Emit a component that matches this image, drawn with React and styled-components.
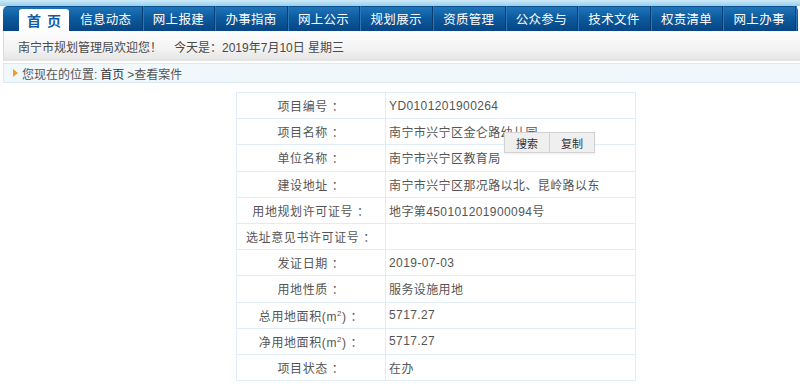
import React from "react";
import styled, { createGlobalStyle } from "styled-components";

const GlobalStyle = createGlobalStyle`
  html, body {
    margin: 0;
    padding: 0;
    background: #ffffff;
  }
  body {
    font-family: "Liberation Sans", Arial, "Noto Sans CJK SC", sans-serif;
  }
`;

const Page = styled.div`
  width: 800px;
  height: 384px;
  overflow: hidden;
  position: relative;
  background: #fff;
`;

const TopStrip = styled.div`
  height: 6px;
  background: linear-gradient(to bottom, #cdebf8, #98d0ec);
`;

const NavBar = styled.div`
  margin: 0 2px 0 3px;
  height: 25px;
  display: flex;
  align-items: flex-end;
  border-radius: 5px 5px 0 0;
  background: linear-gradient(to bottom, #1f75b9 0%, #0d5a9e 45%, #064684 100%);
  border-top: 1px solid #0a4f8f;
  box-sizing: border-box;
`;

const HomeTab = styled.div`
  margin-left: 16px;
  width: 50px;
  height: 22px;
  background: #fff;
  border-radius: 3px 3px 0 0;
  display: flex;
  align-items: center;
  justify-content: center;
  color: #135da3;
  font-weight: bold;
  font-size: 14px;
  letter-spacing: 6px;
  padding-left: 6px;
  box-sizing: border-box;
`;

const NavItem = styled.div`
  width: 72.6px;
  height: 25px;
  flex-shrink: 0;
  display: flex;
  align-items: center;
  justify-content: center;
  color: #ffffff;
  font-size: 12.5px;
  letter-spacing: 0.3px;
  border-right: 1px solid #083c70;
  box-shadow: 1px 0 0 #2a78b8;
  box-sizing: border-box;
  ${({ $first }) => $first && "margin-left: 1px;"}
`;

const WelcomeBar = styled.div`
  margin: 0 0 0 3px;
  height: 30px;
  display: flex;
  align-items: center;
  padding-left: 14px;
  gap: 12px;
  background: linear-gradient(to bottom, #fdfdfd 0%, #f3f3f3 60%, #e3e3e3 100%);
  border-left: 1px solid #dcdcdc;
  color: #4a4a4a;
  font-size: 12px;
`;

const Crumbs = styled.div`
  margin: 2px 0 0 3px;
  height: 20px;
  display: flex;
  align-items: center;
  padding-left: 9px;
  background: #f1f8fc;
  border: 1px solid #d9eaf3;
  border-right: none;
  color: #555;
  font-size: 12px;
  box-sizing: border-box;

  b {
    font-weight: normal;
    color: #333;
    margin: 0 3px;
  }
`;

const Arrow = styled.span`
  width: 0;
  height: 0;
  border-top: 4px solid transparent;
  border-bottom: 4px solid transparent;
  border-left: 5px solid #f29a2e;
  margin-right: 4px;
`;

const Content = styled.div`
  padding: 9px 0 0 236px;
`;

const InfoTable = styled.table`
  width: 400px;
  border-collapse: collapse;
  border: 1px solid #dbe8f8;
  font-size: 12px;
  color: #555;

  td {
    height: 25.2px;
    padding: 0;
    border: 1px solid #e1ecf9;
  }
`;

const LabelCell = styled.td`
  width: 148px;
  text-align: center;
  letter-spacing: 0.6px;
`;

const ValueCell = styled.td`
  padding-left: 3px !important;
  letter-spacing: 0.4px;
`;

const Popup = styled.div`
  position: absolute;
  left: 504px;
  top: 132px;
  display: flex;
  background: #efefef;
  border: 1px solid #d2d2d2;
  box-shadow: 0 1px 2px rgba(0, 0, 0, 0.08);
`;

const PopupButton = styled.div`
  width: 44px;
  height: 19px;
  display: flex;
  align-items: center;
  justify-content: center;
  font-size: 11px;
  color: #333;
  & + & {
    border-left: 1px solid #d2d2d2;
  }
`;

const navItems = [
  "信息动态",
  "网上报建",
  "办事指南",
  "网上公示",
  "规划展示",
  "资质管理",
  "公众参与",
  "技术文件",
  "权责清单",
  "网上办事",
];

const rows = [
  ["项目编号", "YD0101201900264"],
  ["项目名称", "南宁市兴宁区金仑路幼儿园"],
  ["单位名称", "南宁市兴宁区教育局"],
  ["建设地址", "南宁市兴宁区那况路以北、昆岭路以东"],
  ["用地规划许可证号", "地字第450101201900094号"],
  ["选址意见书许可证号", ""],
  ["发证日期", "2019-07-03"],
  ["用地性质", "服务设施用地"],
  [<>总用地面积(m<sup style={{ fontSize: 8 }}>2</sup>)</>, "5717.27"],
  [<>净用地面积(m<sup style={{ fontSize: 8 }}>2</sup>)</>, "5717.27"],
  ["项目状态", "在办"],
];

export default function App() {
  return (
    <Page>
      <GlobalStyle />
      <TopStrip />
      <NavBar>
        <HomeTab>首页</HomeTab>
        {navItems.map((item, i) => (
          <NavItem key={item} $first={i === 0}>
            {item}
          </NavItem>
        ))}
      </NavBar>
      <WelcomeBar>
        <span>南宁市规划管理局欢迎您！</span>
        <span>今天是：2019年7月10日 星期三</span>
      </WelcomeBar>
      <Crumbs>
        <Arrow />
        您现在的位置: <b>首页</b> &gt;查看案件
      </Crumbs>
      <Content>
        <InfoTable>
          <tbody>
            {rows.map(([label, value], i) => (
              <tr key={i}>
                <LabelCell>
                  {label} ：
                </LabelCell>
                <ValueCell>{value}</ValueCell>
              </tr>
            ))}
          </tbody>
        </InfoTable>
      </Content>
      <Popup>
        <PopupButton>搜索</PopupButton>
        <PopupButton>复制</PopupButton>
      </Popup>
    </Page>
  );
}
